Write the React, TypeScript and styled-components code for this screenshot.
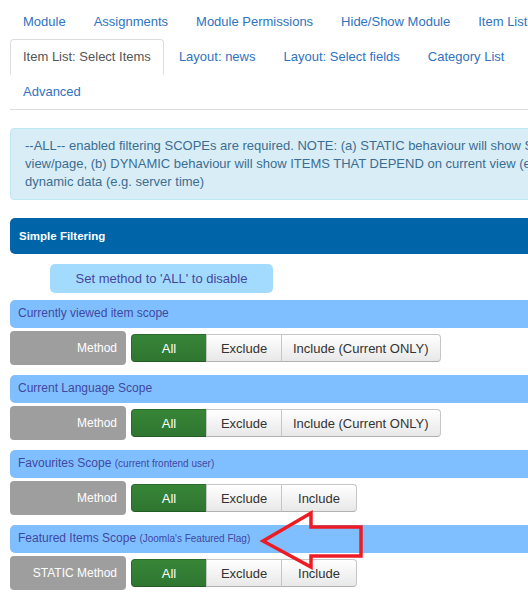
import styled, { createGlobalStyle } from "styled-components";

const GlobalStyle = createGlobalStyle`
    html, body {
        margin: 0;
        padding: 0;
        overflow: hidden;
        background: #fff;
    }
    body {
        font-family: "Liberation Sans", Arial, Helvetica, sans-serif;
        font-size: 13px;
        line-height: 18px;
        color: #333;
    }
`;

const Page = styled.div`
    position: relative;
    width: 760px;
    padding: 4px 0 0 10px;
`;

const Tabs = styled.ul`
    display: flex;
    flex-wrap: wrap;
    width: 584px;
    margin: 0;
    padding: 0;
    list-style: none;
    border-bottom: 1px solid #ddd;
`;

const Tab = styled.li<{ $active?: boolean }>`
    margin: 0 2px -1px 0;

    a {
        display: block;
        padding: 8px 12px;
        line-height: 18px;
        font-size: 13px;
        white-space: nowrap;
        text-decoration: none;
        border: 1px solid ${(p) => (p.$active ? "#ddd" : "transparent")};
        border-bottom-color: ${(p) => (p.$active ? "#fff" : "transparent")};
        border-radius: 4px 4px 0 0;
        background: ${(p) => (p.$active ? "#fff" : "transparent")};
        color: ${(p) => (p.$active ? "#555" : "#2f73c0")};
    }
`;

const Alert = styled.div`
    margin-top: 18px;
    padding: 8px 35px 8px 14px;
    background: #d9edf7;
    border: 1px solid #bce8f1;
    border-radius: 4px;
    color: #3b6d92;
    font-size: 13px;
    line-height: 18px;

    span {
        display: block;
        white-space: nowrap;
    }
`;

const SectionTitle = styled.div`
    margin-top: 18px;
    height: 36px;
    line-height: 36px;
    padding-left: 9px;
    background: #0065a8;
    border-radius: 5px 0 0 5px;
    color: #fff;
    font-weight: 700;
    font-size: 11.5px;
`;

const Hint = styled.div`
    margin: 10px 0 0 40px;
    width: 223px;
    height: 29px;
    line-height: 29px;
    text-align: center;
    background: #a3dbff;
    border-radius: 5px;
    color: #45479c;
    font-size: 13px;
`;

const Scopes = styled.div`
    display: flex;
    flex-direction: column;
    gap: 10px;
    margin-top: 7px;
`;

const Scope = styled.div`
    display: flex;
    flex-direction: column;
    gap: 3px;
`;

const ScopeHeader = styled.div`
    height: 28px;
    line-height: 27px;
    padding-left: 8px;
    background: #80bfff;
    border-radius: 5px 0 0 5px;
    color: #3f48a0;
    font-size: 12px;

    small {
        font-size: 10px;
    }
`;

const MethodRow = styled.div`
    display: flex;
    align-items: center;
    gap: 5px;
`;

const MethodLabel = styled.div`
    box-sizing: border-box;
    width: 116px;
    height: 34px;
    line-height: 34px;
    padding-right: 9px;
    text-align: right;
    background: #9e9e9e;
    border-radius: 4px;
    color: #fff;
    font-size: 12px;
`;

const ButtonGroup = styled.div`
    display: inline-flex;
`;

const Choice = styled.button<{ $active?: boolean }>`
    box-sizing: border-box;
    height: 28px;
    min-width: 76px;
    padding: 0 11px;
    margin-left: -1px;
    font-family: inherit;
    font-size: 13px;
    border: 1px solid ${(p) => (p.$active ? "#2a6a2b" : "#c6c6c6")};
    border-bottom-color: ${(p) => (p.$active ? "#245c25" : "#b0b0b0")};
    background: ${(p) =>
        p.$active
            ? "linear-gradient(#378537, #2f7631)"
            : "linear-gradient(#ffffff, #e8e8e8)"};
    color: ${(p) => (p.$active ? "#fff" : "#333")};
    border-radius: 0;

    &:first-child {
        margin-left: 0;
        border-radius: 4px 0 0 4px;
    }
    &:last-child {
        border-radius: 0 4px 4px 0;
    }
`;

const Arrow = styled.svg`
    position: absolute;
    left: 260px;
    top: 510px;
    overflow: visible;
    pointer-events: none;
`;

interface ScopeData {
    title: string;
    note?: string;
    label: string;
    options: string[];
}

const scopes: ScopeData[] = [
    {
        title: "Currently viewed item scope",
        label: "Method",
        options: ["All", "Exclude", "Include (Current ONLY)"],
    },
    {
        title: "Current Language Scope",
        label: "Method",
        options: ["All", "Exclude", "Include (Current ONLY)"],
    },
    {
        title: "Favourites Scope",
        note: "(current frontend user)",
        label: "Method",
        options: ["All", "Exclude", "Include"],
    },
    {
        title: "Featured Items Scope",
        note: "(Joomla's Featured Flag)",
        label: "STATIC Method",
        options: ["All", "Exclude", "Include"],
    },
];

const tabs = [
    "Module",
    "Assignments",
    "Module Permissions",
    "Hide/Show Module",
    "Item List: Order",
    "Item List: Select Items",
    "Layout: news",
    "Layout: Select fields",
    "Category List",
    "Advanced",
];

const App = () => {
    return (
        <>
            <GlobalStyle />
            <Page>
                <Tabs>
                    {tabs.map((t) => (
                        <Tab key={t} $active={t === "Item List: Select Items"}>
                            <a href="#">{t}</a>
                        </Tab>
                    ))}
                </Tabs>

                <Alert>
                    <span>
                        --ALL-- enabled filtering SCOPEs are required. NOTE: (a) STATIC behaviour will show SAME ITEMS on every
                    </span>
                    <span>
                        view/page, (b) DYNAMIC behaviour will show ITEMS THAT DEPEND on current view (e.g. current item) or on other
                    </span>
                    <span>dynamic data (e.g. server time)</span>
                </Alert>

                <SectionTitle>Simple Filtering</SectionTitle>

                <Hint>Set method to 'ALL' to disable</Hint>

                <Scopes>
                    {scopes.map((s) => (
                        <Scope key={s.title}>
                            <ScopeHeader>
                                {s.title} {s.note && <small>{s.note}</small>}
                            </ScopeHeader>
                            <MethodRow>
                                <MethodLabel>{s.label}</MethodLabel>
                                <ButtonGroup>
                                    {s.options.map((o, i) => (
                                        <Choice key={o} $active={i === 0}>
                                            {o}
                                        </Choice>
                                    ))}
                                </ButtonGroup>
                            </MethodRow>
                        </Scope>
                    ))}
                </Scopes>

                <Arrow width="105" height="60" viewBox="0 0 105 60">
                    <polygon
                        points="3,31 51,3 51,17 101,17 101,46 51,46 51,57"
                        fill="none"
                        stroke="#ed1c24"
                        strokeWidth="3.5"
                        strokeLinejoin="miter"
                    />
                </Arrow>
            </Page>
        </>
    );
};

export default App;
